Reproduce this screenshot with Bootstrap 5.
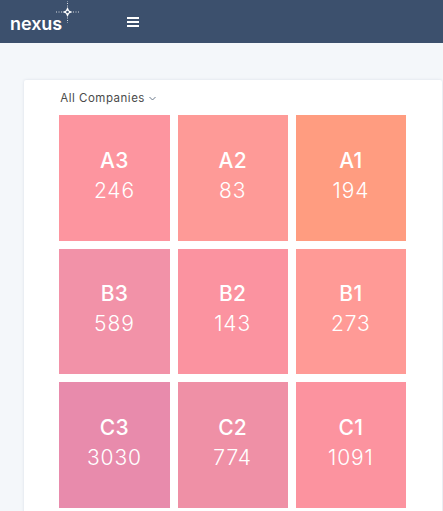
<!DOCTYPE html>
<html lang="en">
<head>
<meta charset="utf-8">
<title>Nexus</title>
<link rel="stylesheet" href="https://cdn.jsdelivr.net/npm/bootstrap@5.3.0/dist/css/bootstrap.min.css">
<style>
html,body{height:100%;overflow:hidden}
body{background:#f4f7fa;font-family:"Inter","Open Sans",sans-serif}
.topbar{height:43px;background:#3c506d;padding:0}
.brand-box{width:127px;padding-left:10px;height:43px}
.brand-word{font-family:"Inter",sans-serif;font-weight:600;font-size:18px;letter-spacing:-.05px;color:#fff;line-height:1;margin-top:15px}
.brand-star{position:absolute;left:55px;top:0}
.burger{width:12px;height:10px}
.page-wrap{padding:37px 1px 0 24px}
.panel{background:#fff;border:0;border-radius:2px 2px 0 0;box-shadow:0 0 3px rgba(60,80,110,.14);padding:11px 36px 0 35.33px;height:440px}
.filter-line{font-size:11.5px;color:#4a4a4a;line-height:15px;height:24px;padding-left:1px;letter-spacing:.5px}
.tile-row{--bs-gutter-x:8px;--bs-gutter-y:8px}
.tile{height:125.67px;color:#fff;padding-bottom:4px}
.tile-code{font-size:21px;font-weight:500;line-height:24px;margin-bottom:6px;letter-spacing:.3px}
.tile-num{font-size:21px;font-weight:300;line-height:24px;letter-spacing:.9px}
.t-a3{background:#fd959f}.t-a2{background:#fe9a97}.t-a1{background:#ff9c80}
.t-b3{background:#f292a8}.t-b2{background:#fb93a0}.t-b1{background:#ff9a96}
.t-c3{background:#e88bac}.t-c2{background:#ef90a6}.t-c1{background:#fc939f}
</style>
</head>
<body>
<nav class="navbar topbar d-flex justify-content-start flex-nowrap align-items-center">
  <div class="brand-box position-relative">
    <div class="brand-word">nexus</div>
    <svg class="brand-star" width="26" height="24" viewBox="0 0 26 24" aria-hidden="true">
      <path d="M12.5 7l1.6 3.4L17.5 12l-3.4 1.6L12.5 17l-1.6-3.4L7.500 12l3.400-1.600z" fill="#fff"/>
      <circle cx="12.500" cy="12" r="1.300" fill="#3c506d"/>
      <path d="M12.500 6.500V1M12.500 17.500V23M7 12H0M18 12h7" stroke="#fff" stroke-width=".8" stroke-dasharray="1 1.500" fill="none"/>
    </svg>
  </div>
  <svg class="burger" viewBox="0 0 12 10" aria-hidden="true"><path d="M0 1h12M0 5h12M0 9h12" stroke="#fff" stroke-width="2"/></svg>
</nav>
<div class="page-wrap">
  <div class="card panel">
    <div class="filter-line">All Companies
      <svg width="7" height="5" viewBox="0 0 7 5" class="align-middle" aria-hidden="true"><path d="M.5 1l3 3 3-3" fill="none" stroke="#5b6b80" stroke-width=".9"/></svg>
    </div>
    <div class="row tile-row">
      <div class="col-4"><div class="tile t-a3 d-flex flex-column justify-content-center align-items-center"><div class="tile-code">A3</div><div class="tile-num">246</div></div></div>
      <div class="col-4"><div class="tile t-a2 d-flex flex-column justify-content-center align-items-center"><div class="tile-code">A2</div><div class="tile-num">83</div></div></div>
      <div class="col-4"><div class="tile t-a1 d-flex flex-column justify-content-center align-items-center"><div class="tile-code">A1</div><div class="tile-num">194</div></div></div>
      <div class="col-4"><div class="tile t-b3 d-flex flex-column justify-content-center align-items-center"><div class="tile-code">B3</div><div class="tile-num">589</div></div></div>
      <div class="col-4"><div class="tile t-b2 d-flex flex-column justify-content-center align-items-center"><div class="tile-code">B2</div><div class="tile-num">143</div></div></div>
      <div class="col-4"><div class="tile t-b1 d-flex flex-column justify-content-center align-items-center"><div class="tile-code">B1</div><div class="tile-num">273</div></div></div>
      <div class="col-4"><div class="tile t-c3 d-flex flex-column justify-content-center align-items-center"><div class="tile-code">C3</div><div class="tile-num">3030</div></div></div>
      <div class="col-4"><div class="tile t-c2 d-flex flex-column justify-content-center align-items-center"><div class="tile-code">C2</div><div class="tile-num">774</div></div></div>
      <div class="col-4"><div class="tile t-c1 d-flex flex-column justify-content-center align-items-center"><div class="tile-code">C1</div><div class="tile-num">1091</div></div></div>
    </div>
  </div>
</div>
<script src="https://cdn.jsdelivr.net/npm/bootstrap@5.3.0/dist/js/bootstrap.bundle.min.js"></script>
</body>
</html>
